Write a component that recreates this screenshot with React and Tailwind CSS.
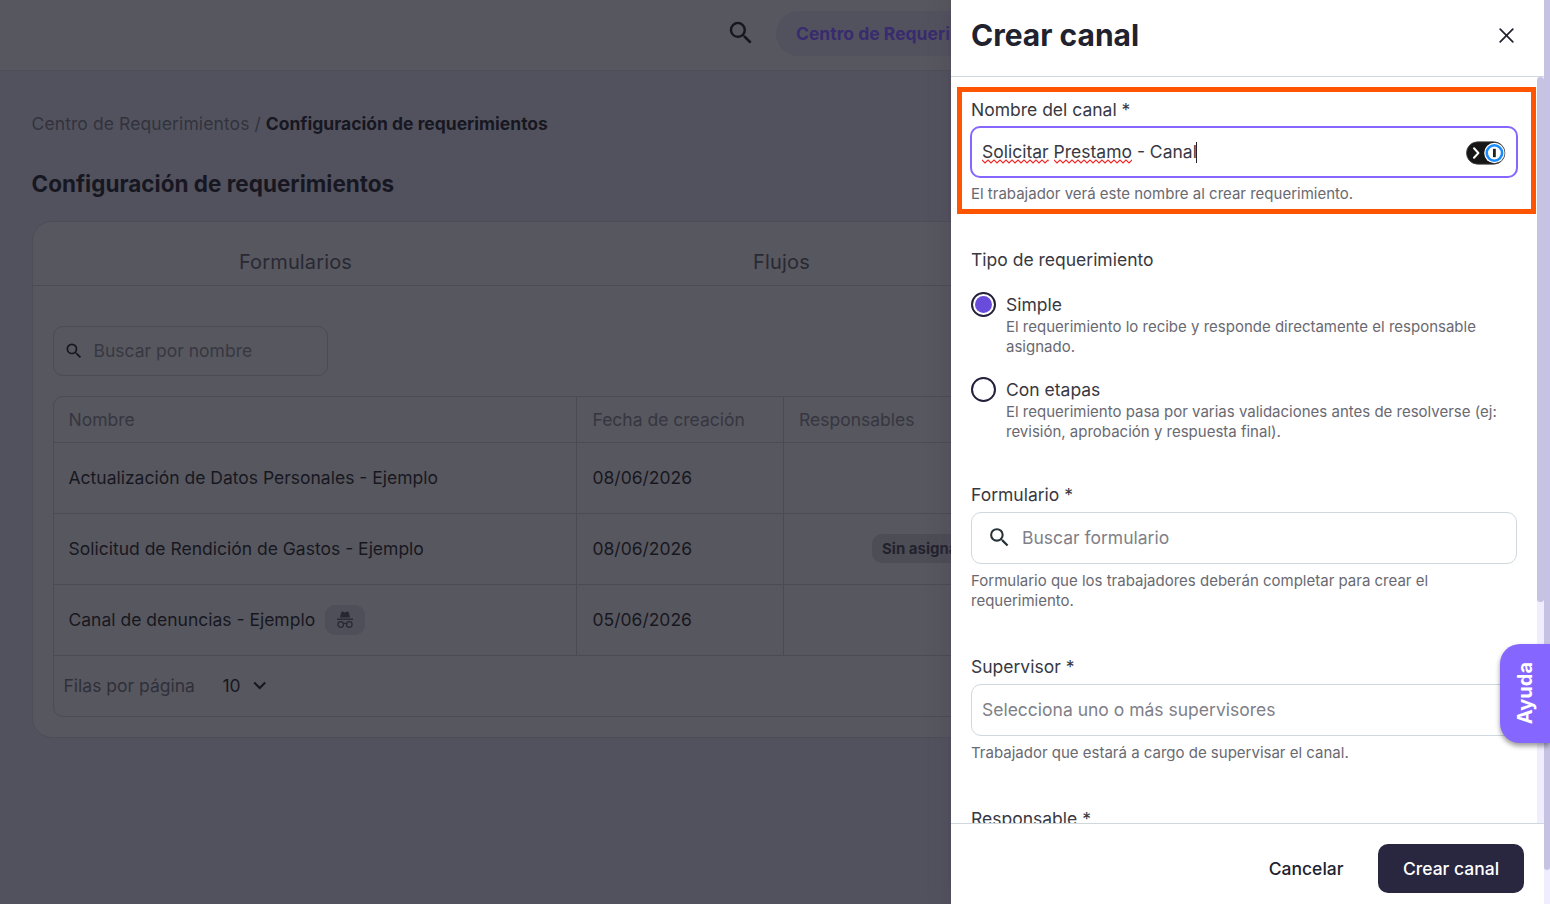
import { MdSearch } from "react-icons/md";

const channels = [
  { name: "Actualización de Datos Personales - Ejemplo", date: "08/06/2026" },
  { name: "Solicitud de Rendición de Gastos - Ejemplo", date: "08/06/2026", unassigned: true },
  { name: "Canal de denuncias - Ejemplo", date: "05/06/2026", anonymous: true },
];

const requestTypes = [
  {
    name: "Simple",
    description: "El requerimiento lo recibe y responde directamente el responsable asignado.",
    checked: true,
  },
  {
    name: "Con etapas",
    description:
      "El requerimiento pasa por varias validaciones antes de resolverse (ej: revisión, aprobación y respuesta final).",
    checked: false,
  },
];

function IncognitoIcon() {
  return (
    <svg width="18" height="18" viewBox="0 0 18 18" fill="none" stroke="#272732">
      <path d="M4 6.6 5.1 1.8Q5.6.3 7.2.7L9 1.5l1.8-.8q1.6-.4 2.1 1.1L14 6.6z" fill="#272732" stroke="none" />
      <path d="M1 8.2h16" strokeWidth="1.3" />
      <circle cx="4.7" cy="13.5" r="2.8" strokeWidth="1.2" />
      <circle cx="13.3" cy="13.5" r="2.8" strokeWidth="1.2" />
      <path d="M7.3 12.8q1.7-1 3.4 0" strokeWidth="1.2" />
    </svg>
  );
}

function OnePasswordIcon() {
  return (
    <svg width="40" height="24" viewBox="0 0 40 24" fill="none">
      <rect x="0.5" y="0.8" width="38.4" height="22.4" rx="11.2" fill="#161616" stroke="#4a4a4a" strokeWidth="0.8" />
      <path d="m8 7.2 4.4 4.8L8 16.8" stroke="#fff" strokeWidth="2" strokeLinecap="round" strokeLinejoin="round" />
      <circle cx="28.4" cy="12" r="10.2" fill="#fff" />
      <circle cx="28.4" cy="12" r="7.7" stroke="#1a8cff" strokeWidth="2.6" />
      <path d="M28.4 7.8v8.4" stroke="#222" strokeWidth="2.8" />
    </svg>
  );
}

// word marked by the spell checker
function Misspelled({ children }) {
  return (
    <span className="relative">
      {children}
      <svg className="absolute bottom-[-2px] left-0 w-full" height="5">
        <defs>
          <pattern id="squiggle" width="6" height="5" patternUnits="userSpaceOnUse">
            <path d="M-1.5 2.5 0 1l3 3 3-3 1.5 1.5" fill="none" stroke="#f52222" strokeWidth="1.2" />
          </pattern>
        </defs>
        <rect width="100%" height="5" fill="url(#squiggle)" />
      </svg>
    </span>
  );
}

function Requests() {
  return (
    <main className="w-[951px] shrink-0 overflow-hidden bg-[#52525e] text-[#171721]">
      <header className="flex h-[71px] w-[1544px] items-center border-b border-[#4b4f58] bg-[#57575f] pb-[3px] pl-[726px]">
        <MdSearch className="mb-[2px] size-[30px] shrink-0" />
        <div className="ml-5 flex h-[45px] w-[300px] items-center rounded-full bg-[#52525e] pt-px pl-5 text-[17.5px] font-bold text-[#382b6e]">
          Centro de Requerimientos
        </div>
      </header>

      <div className="w-[1544px] px-8 pt-[43px]">
        <nav className="-ml-[0.5px] flex h-5 items-center gap-[5px] text-[17.5px]">
          <span className="tracking-[0.1px] text-[#32323d]">Centro de Requerimientos</span>
          <span className="text-[#32323d]">/</span>
          <span className="font-bold">Configuración de requerimientos</span>
        </nav>
        <h1 className="-ml-[0.5px] mt-[35px] h-[30px] text-[22.5px] leading-[30px] font-bold">Configuración de requerimientos</h1>

        <section className="mt-[22px] h-[517px] rounded-[20px] border border-[#4d4d57] bg-[#57575f]">
          <div className="flex h-16 items-center border-b border-[#4b4b55] pt-4 text-[20px] tracking-[0.15px] text-[#292933]">
            <span className="w-[525px] text-center">Formularios</span>
            <span className="w-[447px] text-center">Flujos</span>
          </div>
          <div className="px-5 pt-10">
            <div className="flex h-[50px] w-[275px] items-center rounded-[10px] border border-[#4b4b55] pl-[10px] text-[17.5px] text-[#383842]">
              <MdSearch className="mr-[9.5px] size-5 text-[#171721]" />
              Buscar por nombre
            </div>
            <div className="mt-5 h-[321px] rounded-[10px] border border-[#4b4b55] text-[17.5px]">
              <div className="flex h-[46px] border-b border-[#4b4b55] text-[#363640]">
                <div className="flex w-[523px] items-center border-r border-[#4b4b55] pt-px pl-[14.5px]">Nombre</div>
                <div className="flex w-[207px] items-center border-r border-[#4b4b55] pt-px pl-[15.5px]">Fecha de creación</div>
                <div className="flex items-center pt-px pl-[15px]">Responsables</div>
              </div>
              {channels.map((channel) => (
                <div key={channel.name} className="flex h-[71px] border-b border-[#4b4b55]">
                  <div className="flex w-[523px] items-center border-r border-[#4b4b55] pl-[14.5px]">
                    {channel.name}
                    {channel.anonymous && (
                      <span className="ml-[9.5px] flex h-[30px] w-10 items-center justify-center rounded-[10px] bg-[#4f4f59]">
                        <IncognitoIcon />
                      </span>
                    )}
                  </div>
                  <div className="flex w-[207px] items-center border-r border-[#4b4b55] pl-[15.5px]">{channel.date}</div>
                  <div className="flex items-center pl-[88px]">
                    {channel.unassigned && (
                      <span className="mb-px flex h-[29px] w-[115px] items-center rounded-[10px] bg-[#4d4d56] pt-px pl-[10px] text-[15px] font-bold text-[#22222d]">
                        Sin asignar
                      </span>
                    )}
                  </div>
                </div>
              ))}
              <div className="flex h-[60px] items-center pl-[9.5px]">
                <span className="w-[159px] text-[#30303a]">Filas por página</span>
                <span className="w-[30.5px]">10</span>
                <svg width="14" height="9" viewBox="0 0 14 9" fill="none" stroke="#171721" strokeWidth="2" className="mb-[2px]">
                  <path d="m1.2 1.5 5.5 5.5 5.5-5.5" />
                </svg>
              </div>
            </div>
          </div>
        </section>
      </div>
    </main>
  );
}

function ChannelForm() {
  return (
    <div className="w-[586px] pt-[23px] pl-5 pr-5">
      <label className="block h-5 text-[17.5px] leading-5">Nombre del canal *</label>
      <div className="-mx-px mt-[6px] flex h-[52px] items-center rounded-[10px] border-2 border-[#8566ff] pl-[10px] pr-[10px] text-[17.5px]">
        <span>
          <Misspelled>Solicitar</Misspelled> <Misspelled>Prestamo</Misspelled> - Canal
        </span>
        <span className="-ml-px h-[21px] w-px bg-[#22222f]" />
        <span className="mt-px ml-auto">
          <OnePasswordIcon />
        </span>
      </div>
      <p className="mt-[6px] text-[15px] leading-5 text-[#696971]">El trabajador verá este nombre al crear requerimiento.</p>

      <h3 className="mt-[46px] text-[17.5px] leading-5">Tipo de requerimiento</h3>
      <div className="mt-[22px] flex flex-col gap-5">
        {requestTypes.map((type) => (
          <div key={type.name} className="flex gap-[10px]">
            <span className="flex size-[25px] shrink-0 items-center justify-center rounded-full border-2 border-[#22203a]">
              {type.checked && <span className="size-[17px] rounded-full bg-[#694cdb]" />}
            </span>
            <div className="pt-[3px]">
              <p className="text-[17.5px] leading-5">{type.name}</p>
              <p className="mt-[2px] text-[15px] leading-5 text-[#696971]">{type.description}</p>
            </div>
          </div>
        ))}
      </div>

      <label className="mt-[43px] block text-[17.5px] leading-5">Formulario *</label>
      <div className="mt-[7px] flex h-[52px] items-center rounded-[10px] border border-[#cfd8dc] pl-[15px] text-[17.5px] text-[#808088]">
        <MdSearch className="mr-[10px] mb-px size-[25px] text-[#263238]" />
        Buscar formulario
      </div>
      <p className="mt-[7px] text-[15px] leading-5 text-[#696971]">
        Formulario que los trabajadores deberán completar para crear el requerimiento.
      </p>

      <label className="mt-[46px] block text-[17.5px] leading-5">Supervisor *</label>
      <div className="mt-[7px] flex h-[52px] items-center rounded-[10px] border border-[#cfd8dc] pl-[10px] text-[17.5px] text-[#808088]">
        Selecciona uno o más supervisores
      </div>
      <p className="mt-[7px] text-[15px] leading-5 text-[#696971]">Trabajador que estará a cargo de supervisar el canal.</p>

      <label className="mt-[46px] block text-[17.5px] leading-5">Responsable *</label>
    </div>
  );
}

export default function App() {
  return (
    <div className="relative flex h-[904px] w-[1550px] overflow-hidden font-['Inter',sans-serif]">
      <Requests />

      <aside className="relative flex w-[593px] shrink-0 flex-col bg-white text-[#383842] shadow-[0_0_20px_rgba(70,60,80,0.4)]">
        <header className="flex h-[77px] shrink-0 items-center justify-between border-b border-[#cfd8dc] pb-[5px] pl-5 pr-[30px]">
          <h2 className="text-[30px] font-bold text-[#22222f]">Crear canal</h2>
          <svg width="15" height="15" viewBox="0 0 15 15" stroke="#22222f" strokeWidth="1.7" strokeLinecap="round">
            <path d="m1.2 1.2 12.6 12.6M13.8 1.2 1.2 13.8" />
          </svg>
        </header>
        <div className="flex h-[746px] shrink-0 overflow-hidden">
          <ChannelForm />
          <div className="w-[7px] bg-[#f0edff]">
            <div className="h-[525px] rounded-full bg-[#c5c2e3]" />
          </div>
        </div>
        <footer className="flex flex-1 items-center justify-end border-t border-[#cfd8dc] pr-5 pt-[9px] pb-0 text-[17.5px] font-medium">
          <button className="mr-[34.5px] pt-px text-[#22222f]">Cancelar</button>
          <button className="h-[49px] w-[146px] rounded-[10px] bg-[#28273f] pt-px text-white">Crear canal</button>
        </footer>
        {/* highlight around the channel name field */}
        <div className="absolute top-[87px] left-[6px] h-[127px] w-[579px] border-[5px] border-[#ff5500]" />
      </aside>

      <div className="relative w-[6px] shrink-0 bg-[#f0edff]">
        <div className="h-[870px] rounded-b-full bg-[#c5c2e3]" />
      </div>

      <button className="absolute top-[644px] right-0 flex h-[99px] w-[50px] items-center justify-center rounded-l-[20px] bg-[#8566ff] text-xl font-bold text-white shadow-[0_3px_5px_rgba(0,0,0,0.4)]">
        <span className="rotate-180 [writing-mode:vertical-rl]">Ayuda</span>
      </button>
    </div>
  );
}
